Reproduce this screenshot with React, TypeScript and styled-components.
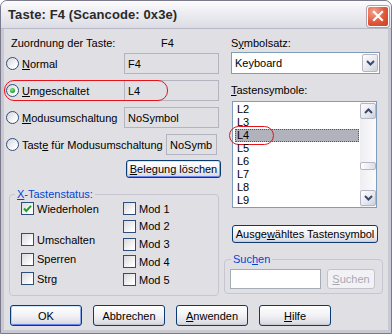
import React from 'react';
import styled, { createGlobalStyle, css } from 'styled-components';

const GlobalStyle = createGlobalStyle`
  html, body {
    margin: 0;
    padding: 0;
  }
  body {
    width: 392px;
    height: 334px;
    overflow: hidden;
    background: #ffffff;
    font-family: 'Liberation Sans', Arial, sans-serif;
    font-size: 11px;
    color: #000;
  }
  * {
    box-sizing: border-box;
  }
`;

const Window = styled.div`
  width: 392px;
  height: 334px;
  display: flex;
  flex-direction: column;
  background: #c9c9d4;
  border: 1px solid #7a7a8c;
  border-radius: 7px 7px 0 0;
  overflow: hidden;
`;

const TitleBar = styled.div`
  height: 28px;
  flex: none;
  display: flex;
  align-items: center;
  justify-content: space-between;
  padding: 0 2px 0 7px;
  background: linear-gradient(#fdfdfe, #eeeef3 40%, #dcdce4);
  border-bottom: 1px solid #b8b8c6;
`;

const TitleText = styled.span`
  font-family: 'Liberation Sans', Arial, sans-serif;
  font-weight: bold;
  font-size: 13px;
  color: #2a2a2a;
  letter-spacing: 0.1px;
`;

const CloseButton = styled.div`
  width: 22px;
  height: 21px;
  margin-top: 3px;
  border: 1px solid #ffffff;
  border-radius: 3px;
  box-shadow: 0 0 0 1px #b0a0a8;
  background: radial-gradient(circle at 30% 25%, #f2a48e, #e0573a 55%, #c8401f);
  display: flex;
  align-items: center;
  justify-content: center;
`;

const Frame = styled.div`
  flex: 1;
  display: flex;
  padding: 0 3px 3px;
`;

const Client = styled.div`
  flex: 1;
  display: flex;
  flex-direction: column;
  background: #e0dfe3;
  padding: 8px 0 4px 2px;
  position: relative;
`;

const Top = styled.div`
  display: flex;
  height: 259px;
`;

const LeftCol = styled.div`
  width: 215px;
  display: flex;
  flex-direction: column;
`;

const RightCol = styled.div`
  width: 159px;
  margin-left: 3px;
  display: flex;
  flex-direction: column;
`;

const HeaderRow = styled.div`
  display: grid;
  grid-template-columns: 150px auto;
  height: 13px;
  line-height: 13px;
  padding-left: 5px;
  margin-bottom: 3px;
`;

const RadioRows = styled.div`
  display: flex;
  flex-direction: column;
  gap: 6px;
`;

const Row = styled.div`
  position: relative;
  display: flex;
  align-items: center;
  height: 21px;
`;

const RadioCircle = styled.span<{ $checked?: boolean }>`
  width: 13px;
  height: 13px;
  flex: none;
  border-radius: 50%;
  border: 1px solid #2c4f7c;
  background: linear-gradient(135deg, #d6d6dc, #ffffff 80%);
  display: flex;
  align-items: center;
  justify-content: center;
  ${p => p.$checked && css`
    &::after {
      content: '';
      width: 5px;
      height: 5px;
      border-radius: 50%;
      background: radial-gradient(circle at 40% 35%, #8fe08f, #21a121 70%);
    }
  `}
`;

const RowLabel = styled.span`
  margin-left: 3px;
  white-space: nowrap;
`;

const ReadBox = styled.div<{ $width: number; $right: number }>`
  width: ${p => p.$width}px;
  height: 21px;
  margin-left: auto;
  margin-right: ${p => p.$right}px;
  border: 1px solid #b4b4c0;
  background: #e0dfe3;
  padding-left: 3px;
  display: flex;
  align-items: center;
  white-space: nowrap;
  overflow: hidden;
`;

const Mark = styled.div<{ $left: number; $top: number; $width: number; $height: number }>`
  position: absolute;
  left: ${p => p.$left}px;
  top: ${p => p.$top}px;
  width: ${p => p.$width}px;
  height: ${p => p.$height}px;
  border: 1px solid #e8121a;
  border-radius: 10px;
  pointer-events: none;
`;

const Button = styled.div<{ $width: number; $height?: number; $focus?: boolean; $disabled?: boolean }>`
  width: ${p => p.$width}px;
  height: ${p => p.$height ?? 21}px;
  flex: none;
  border: 1px solid #0a3b72;
  border-radius: 3px;
  background: linear-gradient(#ffffff, #f2f2f6 50%, #dcdce4 90%, #c8c8d2);
  display: flex;
  align-items: center;
  justify-content: center;
  white-space: nowrap;
  ${p => p.$focus && css`
    box-shadow: inset 0 1px 0 #cee7ff, inset 1px 0 0 #b6d0f5, inset -1px 0 0 #8aa8e8, inset 0 -1px 0 #6982ee;
  `}
  ${p => p.$disabled && css`
    border-color: #c3c3cd;
    background: #f2f2f4;
    color: #a8a8b4;
  `}
`;

const Group = styled.fieldset<{ $width: number; $height: number; $ml: number }>`
  width: ${p => p.$width}px;
  height: ${p => p.$height}px;
  margin: 10px 0 0 ${p => p.$ml}px;
  padding: 0;
  border: 1px solid #c6c6d0;
  border-radius: 4px;
  min-width: 0;
`;

const Legend = styled.legend<{ $ml: number }>`
  margin-left: ${p => p.$ml}px;
  padding: 0 2px;
  color: #0046d5;
  line-height: 13px;
`;

const CheckArea = styled.div`
  display: flex;
  padding: 1px 0 0 11px;
`;

const CheckCol = styled.div<{ $width?: number; $gap: number }>`
  width: ${p => (p.$width ? `${p.$width}px` : 'auto')};
  display: flex;
  flex-direction: column;
  gap: ${p => p.$gap}px;
`;

const CheckItem = styled.div<{ $after?: number }>`
  display: flex;
  align-items: center;
  height: 13px;
  margin-bottom: ${p => p.$after ?? 0}px;
`;

const CheckBox = styled.span`
  width: 13px;
  height: 13px;
  flex: none;
  border: 1px solid #2c4f7c;
  background: linear-gradient(135deg, #d9d9de, #ffffff 85%);
  display: flex;
  align-items: center;
  justify-content: center;
`;

const CheckLabel = styled.span`
  margin-left: 3px;
  white-space: nowrap;
`;

const FieldLabel = styled.div<{ $mt?: number }>`
  height: 13px;
  line-height: 13px;
  padding-left: 7px;
  margin-top: ${p => p.$mt ?? 0}px;
`;

const Combo = styled.div`
  width: 149px;
  height: 22px;
  margin: 2px 0 0 7px;
  border: 1px solid #7f9db9;
  background: #fff;
  display: flex;
  align-items: center;
  padding: 1px;
`;

const ComboText = styled.span`
  flex: 1;
  padding-left: 2px;
`;

const ArrowButton = styled.div<{ $height: number }>`
  width: 16px;
  height: ${p => p.$height}px;
  flex: none;
  border: 1px solid #b6b6c4;
  border-radius: 2px;
  background: linear-gradient(135deg, #ffffff, #e6e6ee 60%, #cfcfda);
  display: flex;
  align-items: center;
  justify-content: center;
`;

const ListBox = styled.div`
  width: 145px;
  height: 107px;
  margin: 4px 0 0 8px;
  border: 1px solid #7f9db9;
  background: #fff;
  display: flex;
  position: relative;
`;

const ListItems = styled.div`
  flex: 1;
  padding: 1px 1px 0 2px;
  display: flex;
  flex-direction: column;
`;

const ListItem = styled.div<{ $selected?: boolean }>`
  position: relative;
  height: 13px;
  line-height: 13px;
  padding-left: 2px;
  ${p => p.$selected && css`
    background: #b2b2bc;
    outline: 1px dotted #55555f;
    outline-offset: -1px;
  `}
`;

const ScrollBar = styled.div`
  width: 16px;
  flex: none;
  background: linear-gradient(90deg, #eeeef2, #fbfbfd);
  display: flex;
  flex-direction: column;
  padding: 1px 0;
`;

const Thumb = styled.div`
  height: 8px;
  margin-top: 43px;
  margin-bottom: auto;
  border: 1px solid #b6b6c4;
  border-radius: 2px;
  background: linear-gradient(90deg, #ffffff, #dcdce6);
`;

const SearchRow = styled.div`
  display: flex;
  align-items: center;
  padding: 3px 0 0 5px;
  gap: 6px;
`;

const Input = styled.div`
  width: 91px;
  height: 20px;
  border: 1px solid #a5acb5;
  background: #fff;
`;

const Bottom = styled.div`
  display: flex;
  gap: 11px;
  margin-top: auto;
  padding-left: 4px;
`;

const Chevron = ({ dir }: { dir: 'up' | 'down' }) => (
  <svg width="9" height="6" viewBox="0 0 9 6">
    <polyline
      points={dir === 'down' ? '1,1 4.5,4.5 8,1' : '1,5 4.5,1.5 8,5'}
      fill="none"
      stroke="#3b4a6b"
      strokeWidth="2"
    />
  </svg>
);

const Check = () => (
  <svg width="9" height="9" viewBox="0 0 9 9">
    <polyline points="1,4.5 3.3,7 8,1.8" fill="none" stroke="#21a121" strokeWidth="2" />
  </svg>
);

const Radio = ({ label, checked }: { label: React.ReactNode; checked?: boolean }) => (
  <>
    <RadioCircle $checked={checked} />
    <RowLabel>{label}</RowLabel>
  </>
);

const CheckEntry = ({ label, checked, after }: { label: string; checked?: boolean; after?: number }) => (
  <CheckItem $after={after}>
    <CheckBox>{checked && <Check />}</CheckBox>
    <CheckLabel>{label}</CheckLabel>
  </CheckItem>
);

const symbols = ['L2', 'L3', 'L4', 'L5', 'L6', 'L7', 'L8', 'L9'];

const App = () => (
  <>
    <GlobalStyle />
    <Window>
      <TitleBar>
        <TitleText>Taste: F4 (Scancode: 0x3e)</TitleText>
        <CloseButton>
          <svg width="12" height="12" viewBox="0 0 12 12">
            <path d="M2 2 L10 10 M10 2 L2 10" stroke="#fff" strokeWidth="2.2" strokeLinecap="square" />
          </svg>
        </CloseButton>
      </TitleBar>
      <Frame>
        <Client>
          <Top>
            <LeftCol>
              <HeaderRow>
                <span>Zuordnung der Taste:</span>
                <span>F4</span>
              </HeaderRow>
              <RadioRows>
                <Row>
                  <Radio label={<><u>N</u>ormal</>} />
                  <ReadBox $width={95} $right={2}>F4</ReadBox>
                </Row>
                <Row>
                  <Radio label={<><u>U</u>mgeschaltet</>} checked />
                  <ReadBox $width={95} $right={2}>L4</ReadBox>
                  <Mark $left={-2} $top={0} $width={164} $height={21} />
                </Row>
                <Row>
                  <Radio label={<><u>M</u>odusumschaltung</>} />
                  <ReadBox $width={95} $right={2}>NoSymbol</ReadBox>
                </Row>
                <Row>
                  <Radio label={<>Tast<u>e</u> für Modusumschaltung</>} />
                  <ReadBox $width={51} $right={4}>NoSymb</ReadBox>
                </Row>
              </RadioRows>
              <Button $width={95} $height={18} $focus style={{ alignSelf: 'flex-end', marginTop: 5 }}>
                <span><u>B</u>elegung löschen</span>
              </Button>
              <Group $width={210} $height={108} $ml={3}>
                <Legend $ml={5}><u>X</u>-Tastenstatus:</Legend>
                <CheckArea>
                  <CheckCol $width={102} $gap={6.5}>
                    <CheckEntry label="Wiederholen" checked after={11.5} />
                    <CheckEntry label="Umschalten" />
                    <CheckEntry label="Sperren" />
                    <CheckEntry label="Strg" />
                  </CheckCol>
                  <CheckCol $gap={4.75}>
                    <CheckEntry label="Mod 1" />
                    <CheckEntry label="Mod 2" />
                    <CheckEntry label="Mod 3" />
                    <CheckEntry label="Mod 4" />
                    <CheckEntry label="Mod 5" />
                  </CheckCol>
                </CheckArea>
              </Group>
            </LeftCol>
            <RightCol>
              <FieldLabel>S<u>y</u>mbolsatz:</FieldLabel>
              <Combo>
                <ComboText>Keyboard</ComboText>
                <ArrowButton $height={18}>
                  <Chevron dir="down" />
                </ArrowButton>
              </Combo>
              <FieldLabel $mt={10}><u>T</u>astensymbole:</FieldLabel>
              <ListBox>
                <ListItems>
                  {symbols.map(s => (
                    <ListItem key={s} $selected={s === 'L4'}>
                      {s}
                      {s === 'L4' && <Mark $left={-6} $top={-3} $width={45} $height={19} />}
                    </ListItem>
                  ))}
                </ListItems>
                <ScrollBar>
                  <ArrowButton $height={16}>
                    <Chevron dir="up" />
                  </ArrowButton>
                  <Thumb />
                  <ArrowButton $height={16}>
                    <Chevron dir="down" />
                  </ArrowButton>
                </ScrollBar>
              </ListBox>
              <Button $width={146} $height={18} style={{ marginTop: 17, marginLeft: 8 }}>
                <span>Ausge<u>w</u>ähltes Tastensymbol</span>
              </Button>
              <Group $width={159} $height={41} $ml={0}>
                <Legend $ml={6}>Suc<u>h</u>en</Legend>
                <SearchRow>
                  <Input />
                  <Button $width={48} $height={20} $disabled>
                    <span><u>S</u>uchen</span>
                  </Button>
                </SearchRow>
              </Group>
            </RightCol>
          </Top>
          <Bottom>
            <Button $width={72} $focus>OK</Button>
            <Button $width={72}>Abbrechen</Button>
            <Button $width={72}><span><u>A</u>nwenden</span></Button>
            <Button $width={72}><span><u>H</u>ilfe</span></Button>
          </Bottom>
        </Client>
      </Frame>
    </Window>
  </>
);

export default App;
